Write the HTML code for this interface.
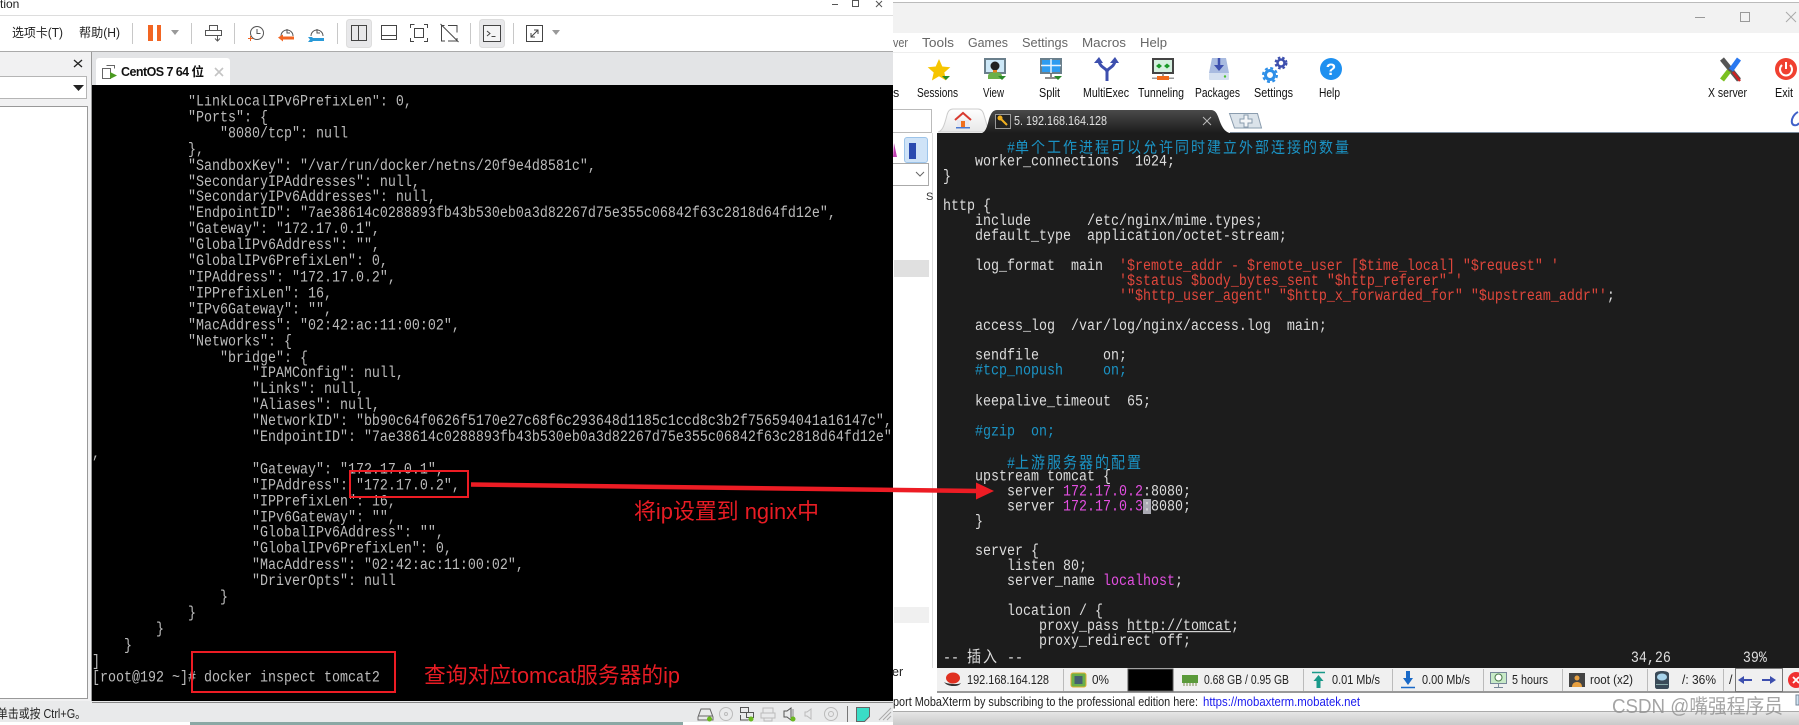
<!DOCTYPE html>
<html lang="zh">
<head>
<meta charset="utf-8">
<title>Docker inspect and nginx upstream</title>
<style>
html,body{margin:0;padding:0;width:1799px;height:725px;overflow:hidden;background:#fff}
.b{position:absolute}
#lt{left:92px;top:94.5px;width:801px;color:#bbb;font:13.333px "Liberation Mono","Noto Sans CJK SC",monospace;transform:scaleY(1.15);transform-origin:0 0;white-space:pre;overflow:hidden;height:540px}
#lt div{height:13.913px;line-height:13.913px}
#rt{left:943px;top:140px;width:856px;color:#dcdcdc;font:13.333px "Liberation Mono","Noto Sans CJK SC",monospace;transform:scaleY(1.15);transform-origin:0 0;white-space:pre;height:460px;overflow:hidden}
#rt div{height:13.043px;line-height:13.043px}
.c{color:#1b93c4}.s{color:#e0473c}.n{color:#e24fe0}
.z{font-family:"Noto Sans CJK SC",sans-serif;font-size:14px;letter-spacing:2px;line-height:13px}
.u{text-decoration:underline}
svg{position:absolute;left:0;top:0}
text{font-family:"Liberation Sans","Noto Sans CJK SC",sans-serif}
</style>
</head>
<body>
<div class="b" style="left:0;top:0;width:893px;height:725px;background:#fff"></div>
<div class="b" style="left:0;top:15px;width:893px;height:1px;background:#ddd"></div>
<div class="b" style="left:0;top:51px;width:893px;height:1px;background:#aaa"></div>
<div class="b" style="left:0;top:52px;width:91px;height:650px;background:#f1f1f2"></div>
<div class="b" style="left:91px;top:52px;width:1px;height:650px;background:#999"></div>
<div class="b" style="left:92px;top:52px;width:801px;height:33px;background:#e3e4e6"></div>
<div class="b" style="left:96px;top:58px;width:134px;height:27px;background:#fff;border-radius:3px 3px 0 0"></div>
<div class="b" style="left:-2px;top:76px;width:87px;height:21px;background:#fff;border:1px solid #b5b5b5"></div>
<div class="b" style="left:-2px;top:106px;width:88px;height:591px;background:#fff;border:1px solid #999"></div>
<div class="b" style="left:92px;top:85px;width:801px;height:617px;background:#000"></div>
<div class="b" style="left:0;top:701px;width:893px;height:21px;background:#e9eaeb"></div>
<div class="b" style="left:92px;top:702px;width:801px;height:1px;background:#888"></div>
<div class="b" style="left:190px;top:722px;width:493px;height:3px;background:#8aa8a4"></div>

<div class="b" id="lt"><div>            "LinkLocalIPv6PrefixLen": 0,</div><div>            "Ports": {</div><div>                "8080/tcp": null</div><div>            },</div><div>            "SandboxKey": "/var/run/docker/netns/20f9e4d8581c",</div><div>            "SecondaryIPAddresses": null,</div><div>            "SecondaryIPv6Addresses": null,</div><div>            "EndpointID": "7ae38614c0288893fb43b530eb0a3d82267d75e355c06842f63c2818d64fd12e",</div><div>            "Gateway": "172.17.0.1",</div><div>            "GlobalIPv6Address": "",</div><div>            "GlobalIPv6PrefixLen": 0,</div><div>            "IPAddress": "172.17.0.2",</div><div>            "IPPrefixLen": 16,</div><div>            "IPv6Gateway": "",</div><div>            "MacAddress": "02:42:ac:11:00:02",</div><div>            "Networks": {</div><div>                "bridge": {</div><div>                    "IPAMConfig": null,</div><div>                    "Links": null,</div><div>                    "Aliases": null,</div><div>                    "NetworkID": "bb90c64f0626f5170e27c68f6c293648d1185c1ccd8c3b2f756594041a16147c",</div><div>                    "EndpointID": "7ae38614c0288893fb43b530eb0a3d82267d75e355c06842f63c2818d64fd12e"</div><div>,</div><div>                    "Gateway": "172.17.0.1",</div><div>                    "IPAddress": "172.17.0.2",</div><div>                    "IPPrefixLen": 16,</div><div>                    "IPv6Gateway": "",</div><div>                    "GlobalIPv6Address": "",</div><div>                    "GlobalIPv6PrefixLen": 0,</div><div>                    "MacAddress": "02:42:ac:11:00:02",</div><div>                    "DriverOpts": null</div><div>                }</div><div>            }</div><div>        }</div><div>    }</div><div>]</div><div>[root@192 ~]# docker inspect tomcat2</div></div>

<!-- right window -->
<div class="b" style="left:893px;top:2px;width:906px;height:1px;background:#bbb"></div>
<div class="b" style="left:893px;top:3px;width:906px;height:30px;background:#f2f2f2"></div>
<div class="b" style="left:893px;top:52px;width:906px;height:1px;background:#eee"></div>
<div class="b" style="left:893px;top:109px;width:38px;height:22px;background:#fff;border:1px solid #bbb;border-left:0"></div>
<div class="b" style="left:932px;top:133px;width:1px;height:535px;background:#ddd"></div>
<div class="b" style="left:904px;top:137px;width:22px;height:24px;background:#cfe3f7;border:1px solid #9cc4ea;border-radius:3px"></div>
<div class="b" style="left:909px;top:143px;width:7px;height:16px;background:#2a4ab0"></div>
<div class="b" style="left:893px;top:163px;width:35px;height:21px;background:#fff;border:1px solid #aaa;border-left:0"></div>
<div class="b" style="left:894px;top:260px;width:35px;height:17px;background:#e0e0e0"></div>
<div class="b" style="left:894px;top:607px;width:35px;height:16px;background:#f0f0f0"></div>
<div class="b" style="left:937px;top:133px;width:862px;height:535px;background:#1c1c1c"></div>
<div class="b" style="left:1230px;top:132px;width:569px;height:1px;background:#7a8a9a"></div>
<div class="b" style="left:937px;top:668px;width:862px;height:24px;background:#f0f0f0"></div>
<div class="b" style="left:937px;top:691px;width:862px;height:2px;background:#999"></div>
<div class="b" style="left:893px;top:711px;width:906px;height:1px;background:#aaa"></div>
<div class="b" style="left:893px;top:712px;width:906px;height:13px;background:linear-gradient(#e6e6e6,#c9c9c9)"></div>
<div class="b" style="left:1143px;top:499px;width:8px;height:15px;background:#a9a9b2"></div>

<div class="b" id="rt"><div>        <span class="c">#<span class="z">单个工作进程可以允许同时建立外部连接的数量</span></span></div><div>    worker_connections  1024;</div><div>}</div><div> </div><div>http {</div><div>    include       /etc/nginx/mime.types;</div><div>    default_type  application/octet-stream;</div><div> </div><div>    log_format  main  <span class="s">'$remote_addr - $remote_user [$time_local] "$request" '</span></div><div><span class="s">                      '$status $body_bytes_sent "$http_referer" '</span></div><div><span class="s">                      '"$http_user_agent" "$http_x_forwarded_for" "$upstream_addr"'</span>;</div><div> </div><div>    access_log  /var/log/nginx/access.log  main;</div><div> </div><div>    sendfile        on;</div><div>    <span class="c">#tcp_nopush     on;</span></div><div> </div><div>    keepalive_timeout  65;</div><div> </div><div>    <span class="c">#gzip  on;</span></div><div> </div><div>        <span class="c">#<span class="z">上游服务器的配置</span></span></div><div>    upstream tomcat {</div><div>        server <span class="n">172.17.0.2</span>:8080;</div><div>        server <span class="n">172.17.0.3</span>:8080;</div><div>    }</div><div> </div><div>    server {</div><div>        listen 80;</div><div>        server_name <span class="n">localhost</span>;</div><div> </div><div>        location / {</div><div>            proxy_pass <span class="u">http://tomcat</span>;</div><div>            proxy_redirect off;</div><div>-- <span class="z">插入</span> --                                                                            34,26         39%</div></div>

<svg width="1799" height="725" viewBox="0 0 1799 725" xmlns="http://www.w3.org/2000/svg">
<!-- left window text -->
<text x="0" y="8" font-size="12" fill="#222">tion</text>
<g fill="none" stroke="#555" stroke-width="1"><path d="M832 4.500h6"/><rect x="852.500" y="0.500" width="6" height="6"/><path d="M876 1l6 6m0-6l-6 6"/></g>
<text x="12" y="37" font-size="12.500" fill="#222" textLength="51" lengthAdjust="spacingAndGlyphs">选项卡(T)</text>
<text x="79" y="37" font-size="12.500" fill="#222" textLength="41" lengthAdjust="spacingAndGlyphs">帮助(H)</text>
<g fill="#c8c8c8"><rect x="132" y="23" width="1" height="21"/><rect x="191" y="23" width="1" height="21"/><rect x="234" y="23" width="1" height="21"/><rect x="337" y="23" width="1" height="21"/><rect x="470" y="23" width="1" height="21"/><rect x="513" y="23" width="1" height="21"/></g>
<rect x="148" y="25" width="5" height="16" fill="#f26522"/><rect x="157" y="25" width="4" height="16" fill="#f26522"/>
<path d="M171 30h8l-4 5z" fill="#999"/>
<g fill="none" stroke="#555" stroke-width="1">
<path d="M209.500 30v-4.500h8v4.500M205.500 30.500h16v5h-16z"/><path d="M217.500 35v6m-2.500-2.500l2.500 2.500 2.500-2.500"/>
<circle cx="257" cy="33" r="6.500"/><path d="M257 29v4.500h3.500"/>
<path d="M281 36a6 6 0 1 1 12 0"/><path d="M287 29v4h3"/>
<path d="M311 36a6 6 0 1 1 12 0"/><path d="M317 29v4h3"/>
</g>
<path d="M248 38.500h5M250.500 36v5" stroke="#f26522" fill="none"/>
<path d="M278 37.500l5-3v2h11v3h-11v2z" fill="#f26522"/>
<path d="M308 37h4l1 1h11v3h-11l-1 1h-4l2-2.500z" fill="#2a9ad8"/>
<rect x="346.500" y="19.500" width="25" height="28" rx="3" fill="#e8e8ea" stroke="#ddd"/>
<rect x="479.500" y="19.500" width="25" height="28" rx="3" fill="#e8e8ea" stroke="#ddd"/>
<g fill="none" stroke="#444" stroke-width="1">
<rect x="351.500" y="25.500" width="15" height="15"/><path d="M358.500 25.500v15"/>
<rect x="381.500" y="25.500" width="15" height="14"/><path d="M381.500 35.500h15"/>
<path d="M410.500 28v-3.500h4M424 24.500h3.500v3.500M427.500 38v3.500h-3.500M414 41.500h-3.500v-3.500"/><rect x="414.500" y="28.500" width="9" height="9"/>
<path d="M448 25.500h9v7M457 38v3h-9M445 41h-3.500V25.500h3"/><path d="M440.500 24l18 18"/>
<rect x="483.500" y="25.500" width="17" height="16" fill="#f4f4f5"/><path d="M487 31l3 2.500-3 2.500M491.500 36.500h4"/>
<rect x="526.500" y="25.500" width="16" height="16"/><path d="M531 37l7-7m-4 0h4v4M531 33v4h4"/>
</g>
<path d="M552 30h8l-4 5z" fill="#999"/>
<path d="M74 60l8 7m0-7l-8 7" stroke="#222" stroke-width="1.300" fill="none"/>
<path d="M73 85h11l-5.500 6z" fill="#222"/>
<g fill="none" stroke="#666"><path d="M106.500 65.500h8v3"/><path d="M102.500 68.500h8v10h-8z" fill="#fff"/></g>
<path d="M110 72l7 3.500-7 3.500z" fill="#4a9a20"/>
<text x="121" y="76" font-size="12.500" font-weight="bold" fill="#111" textLength="83">CentOS 7 64 位</text>
<path d="M215 68l8 8m0-8l-8 8" stroke="#c4c4c4" stroke-width="1.600" fill="none"/>
<text x="-3" y="718" font-size="12.500" fill="#222" textLength="89" lengthAdjust="spacingAndGlyphs">单击或按 Ctrl+G。</text>
<g fill="none" stroke="#666">
<path d="M698 717l3-8h9l3 8v3h-15z"/><path d="M698 716h15"/>
</g>
<g fill="none" stroke="#bbb">
<circle cx="726" cy="714" r="6.500"/><circle cx="726" cy="714" r="1.500"/>
<path d="M763 713v-5h10v5M761 713h14v5h-14zM764 718v3h8v-3"/>
<path d="M811 709l-4 3h-2v4h2l4 3z"/>
<circle cx="831" cy="714" r="6.500"/><circle cx="831" cy="714" r="2.500"/>
</g>
<g fill="none" stroke="#555"><path d="M740.500 707.500h8v5h-8zM746.500 712.500h7v5h-7zM740.500 715v5h8" /></g>
<path d="M784 711v6h3l4 3v-12l-4 3z" fill="none" stroke="#555"/><path d="M793 709v8" stroke="#888"/>
<circle cx="709.500" cy="719" r="2.500" fill="#6ab820"/><circle cx="751" cy="719" r="2.500" fill="#6ab820"/><circle cx="793" cy="719" r="2.500" fill="#6ab820"/>
<rect x="847" y="706" width="1" height="16" fill="#777"/>
<path d="M856.500 707.500h13v9l-5 5h-8z" fill="#3adcc6" stroke="#666"/>
<path d="M883 720l8-8M887 720l4-4M879 720l12-12" stroke="#aaa" fill="none"/>

<!-- right window chrome -->
<path d="M1695 17.500h10M1740.500 12.500h9v9h-9z" stroke="#999" fill="none"/><path d="M1786 12l10 10m0-10l-10 10" stroke="#aaa" fill="none"/>
<g font-size="12.500" fill="#666">
<text x="893" y="47" textLength="15" lengthAdjust="spacingAndGlyphs">ver</text>
<text x="922" y="47" textLength="32" lengthAdjust="spacingAndGlyphs">Tools</text>
<text x="968" y="47" textLength="40" lengthAdjust="spacingAndGlyphs">Games</text>
<text x="1022" y="47" textLength="46" lengthAdjust="spacingAndGlyphs">Settings</text>
<text x="1082" y="47" textLength="44" lengthAdjust="spacingAndGlyphs">Macros</text>
<text x="1140" y="47" textLength="27" lengthAdjust="spacingAndGlyphs">Help</text>
</g>
<g font-size="12.500" fill="#111">
<text x="893" y="97">s</text>
<text x="917" y="97" textLength="41" lengthAdjust="spacingAndGlyphs">Sessions</text>
<text x="983" y="97" textLength="21" lengthAdjust="spacingAndGlyphs">View</text>
<text x="1039" y="97" textLength="21" lengthAdjust="spacingAndGlyphs">Split</text>
<text x="1083" y="97" textLength="46" lengthAdjust="spacingAndGlyphs">MultiExec</text>
<text x="1138" y="97" textLength="46" lengthAdjust="spacingAndGlyphs">Tunneling</text>
<text x="1195" y="97" textLength="45" lengthAdjust="spacingAndGlyphs">Packages</text>
<text x="1254" y="97" textLength="39" lengthAdjust="spacingAndGlyphs">Settings</text>
<text x="1319" y="97" textLength="21" lengthAdjust="spacingAndGlyphs">Help</text>
<text x="1708" y="97" textLength="39" lengthAdjust="spacingAndGlyphs">X server</text>
<text x="1775" y="97" textLength="18" lengthAdjust="spacingAndGlyphs">Exit</text>
</g>
<!-- star -->
<path d="M939 59l3.300 7.500 8 .7-6 5.300 1.800 8-7.100-4.200-7.100 4.200 1.800-8-6-5.300 8-.7z" fill="#f6c500"/>
<path d="M942 76h8l-4 4z" fill="#2a8a2a"/>
<!-- view -->
<rect x="985" y="59" width="20" height="14" fill="#cde8f8" stroke="#6a7f8c" stroke-width="2"/>
<path d="M988 79v-3c0-3 4-4 7-4s7 1 7 4v3z" fill="#6ab04a"/><circle cx="995" cy="66" r="4.500" fill="#222"/><rect x="993" y="70" width="4" height="2.500" fill="#e08020"/>
<path d="M998 76h8l-4 4z" fill="#2a8a2a"/>
<!-- split -->
<rect x="1041" y="59" width="20" height="14" fill="#2e9cf0" stroke="#6a7f8c" stroke-width="2"/><path d="M1051 59v14M1041 65.500h20" stroke="#e8f4fe" stroke-width="1.500"/>
<path d="M1051 73v4M1045 78h12" stroke="#666" stroke-width="1.500"/>
<path d="M1054 76h8l-4 4z" fill="#2a8a2a"/>
<!-- multiexec -->
<g fill="none" stroke="#3d4fae" stroke-width="3"><path d="M1107 81v-9c0-4-7-4-8-11M1107 72c0-4 7-4 8-11"/></g>
<path d="M1099 57l-5 6h9zM1115 57l-5 6h9z" fill="#3d4fae"/>
<!-- tunneling -->
<rect x="1153" y="59" width="20" height="14" fill="#d5f0e0" stroke="#444" stroke-width="2"/>
<path d="M1156 66l3-2.500v5zM1162 66l-3-2.500v5zM1164 66l3-2.500v5zM1170 66l-3-2.500v5z" fill="#1a9a2a"/>
<path d="M1163 73v4" stroke="#777" stroke-width="1.500"/><rect x="1152" y="77.500" width="22" height="1.500" fill="#999"/><rect x="1157" y="76" width="12" height="4" fill="#f06a1a"/>
<!-- packages -->
<path d="M1212 58h14l3 15h-20z" fill="#a9bbe0"/><rect x="1209" y="73" width="20" height="7" rx="1" fill="#d5e0f0"/><circle cx="1225" cy="76.500" r="1.200" fill="#4ac030"/>
<path d="M1219 58v10" stroke="#3d4fae" stroke-width="2.500"/><path d="M1214 65h10l-5 6z" fill="#3d4fae"/>
<!-- settings -->
<circle cx="1270" cy="75" r="4.500" fill="none" stroke="#2e8fe8" stroke-width="3"/><circle cx="1270" cy="75" r="7" fill="none" stroke="#2e8fe8" stroke-width="2" stroke-dasharray="3 2.500"/>
<circle cx="1281" cy="63" r="3.500" fill="none" stroke="#3d4fae" stroke-width="2.500"/><circle cx="1281" cy="63" r="5.500" fill="none" stroke="#3d4fae" stroke-width="2" stroke-dasharray="2.500 2"/>
<!-- help -->
<circle cx="1331" cy="69" r="11" fill="#1e90f0"/><text x="1331" y="75" font-size="17" font-weight="bold" fill="#fff" text-anchor="middle">?</text>
<!-- x server -->
<path d="M1722 59l17 21" stroke="#555" stroke-width="5"/><path d="M1739 59l-8 11" stroke="#2a78f0" stroke-width="5"/><path d="M1729 71l-7 9" stroke="#7ac020" stroke-width="5"/><path d="M1733 72l7 9" stroke="#d02020" stroke-width="2.500"/>
<!-- exit -->
<circle cx="1786" cy="69" r="11" fill="#f04030"/><path d="M1782 65a6 6 0 1 0 8 0M1786 62v7" stroke="#fff" stroke-width="2" fill="none"/>
<!-- tabs -->
<defs><linearGradient id="d" x1="0" y1="0" x2="0" y2="1"><stop offset="0" stop-color="#4a4a4a"/><stop offset="1" stop-color="#1c1c1c"/></linearGradient><linearGradient id="w" x1="0" y1="0" x2="0" y2="1"><stop offset="0" stop-color="#fff"/><stop offset="1" stop-color="#e8e8e8"/></linearGradient></defs>
<path d="M938 132c4-1 6-5 9-17 1-4 3-6 6-6h25c3 0 5 2 6 6l5 17z" fill="url(#w)" stroke="#ccc"/>
<path d="M955 120l8-7 8 7" fill="none" stroke="#d83a30" stroke-width="2"/><rect x="957" y="120" width="12" height="8" fill="#e8e8f0"/><rect x="961" y="121" width="4" height="7" fill="#f07020"/><rect x="956" y="127" width="14" height="1.500" fill="#4a78d0"/>
<path d="M982 133c3-1 5-5 7-14 2-6 4-9 8-9h214c4 0 6 3 8 9 2 6 5 13 11 14z" fill="url(#d)"/>
<rect x="995.500" y="114.500" width="15" height="14" fill="#222" stroke="#999"/>
<circle cx="1000" cy="118" r="2.500" fill="#f0b020"/><path d="M1001 119l6 6" stroke="#f0b020" stroke-width="2"/>
<text x="1014" y="125" font-size="12.500" fill="#e0e0e0" textLength="93" lengthAdjust="spacingAndGlyphs">5. 192.168.164.128</text>
<path d="M1203 117l8 8m0-8l-8 8" stroke="#bbb" fill="none"/>
<path d="M1229.500 113.500h28l4 14.500h-27z" fill="#dbe3ea" stroke="#8a9cae"/><path d="M1244 115h4v4h4v4h-4v4h-4v-4h-4v-4h4z" fill="#f4f6f8" stroke="#8a9cae"/>
<path d="M1798 112c-4 2-7 7-6 11 1 3 5 3 7 0" fill="none" stroke="#4060c8" stroke-width="2"/>
<path d="M916 172l4 4 4-4" fill="none" stroke="#666"/>
<path d="M894 143l3 14h-4z" fill="#c040b0"/>
<text x="926" y="200" font-size="11" fill="#333">S</text>
<text x="892" y="676" font-size="12.500" fill="#222">er</text>
<!-- status bar -->
<g fill="#bbb"><rect x="1063" y="669" width="1" height="22"/><rect x="1303" y="669" width="1" height="22"/><rect x="1392" y="669" width="1" height="22"/><rect x="1483" y="669" width="1" height="22"/><rect x="1562" y="669" width="1" height="22"/><rect x="1647" y="669" width="1" height="22"/><rect x="1723" y="669" width="1" height="22"/></g>
<rect x="1128" y="669" width="45" height="22" fill="#000" stroke="#555"/>
<ellipse cx="953" cy="678" rx="7" ry="5.500" fill="#e03020"/><path d="M944 682c3 2 14 3 17 1-2 3-5 3-8 3s-7-1-9-4z" fill="#333"/>
<rect x="1071" y="673" width="15" height="14" rx="2" fill="#6ab04a" stroke="#e0b030"/><rect x="1074.500" y="676" width="8" height="8" fill="#456070"/>
<rect x="1182" y="675" width="16" height="8" fill="#5a9a3a"/><path d="M1184 683v3m3-3v3m3-3v3m3-3v3m3-3v3" stroke="#7a8a50"/>
<path d="M1312 672.500h13" stroke="#1a9a8a" stroke-width="1.500"/><path d="M1318.500 675l5 6h-3v7h-4v-7h-3z" fill="#1a9a8a"/>
<path d="M1401 687.500h14" stroke="#1a6ac8" stroke-width="1.500"/><path d="M1406 671h4v7h3l-5 7-5-7h3z" fill="#1a6ac8"/>
<rect x="1490.500" y="672.500" width="16" height="11" fill="#c8eac8" stroke="#789"/><circle cx="1498.500" cy="677.500" r="3.500" fill="#fff" stroke="#4a7a4a"/><path d="M1498.500 684v3M1494 687.500h9" stroke="#789"/>
<rect x="1569" y="673" width="16" height="14" fill="#444"/><circle cx="1577" cy="678" r="2.500" fill="#e8a040"/><path d="M1572 687c0-4 3-5 5-5s5 1 5 5z" fill="#e8a040"/>
<path d="M1655 674c0-2 3-3 7-3s7 1 7 3v13c0 1-1 2-2 2h-10c-1 0-2-1-2-2z" fill="#3a4a58"/><ellipse cx="1662" cy="677" rx="5" ry="3.500" fill="#a8d4ec"/><rect x="1656" y="684" width="12" height="1" fill="#8aa"/>
<g font-size="12.500" fill="#222">
<text x="967" y="684" textLength="82" lengthAdjust="spacingAndGlyphs">192.168.164.128</text>
<text x="1092" y="684" textLength="17" lengthAdjust="spacingAndGlyphs">0%</text>
<text x="1204" y="684" textLength="85" lengthAdjust="spacingAndGlyphs">0.68 GB / 0.95 GB</text>
<text x="1332" y="684" textLength="48" lengthAdjust="spacingAndGlyphs">0.01 Mb/s</text>
<text x="1422" y="684" textLength="48" lengthAdjust="spacingAndGlyphs">0.00 Mb/s</text>
<text x="1512" y="684" textLength="36" lengthAdjust="spacingAndGlyphs">5 hours</text>
<text x="1590" y="684" textLength="43" lengthAdjust="spacingAndGlyphs">root (x2)</text>
<text x="1682" y="684" textLength="34" lengthAdjust="spacingAndGlyphs">/: 36%</text>
<text x="1729" y="684">/</text>
</g>
<rect x="1735.500" y="668.500" width="47" height="23" fill="#f0f0f0" stroke="#777"/>
<path d="M1738 680l6-4v3h8v2h-8v3zM1776 680l-6-4v3h-8v2h8v3z" fill="#3d4fae"/>
<circle cx="1796" cy="680" r="8" fill="#f03030"/><path d="M1793 677l6 6m0-6l-6 6" stroke="#fff" stroke-width="1.800"/>
<!-- message bar -->
<text x="893" y="706" font-size="12.500" fill="#222" textLength="305" lengthAdjust="spacingAndGlyphs">port MobaXterm by subscribing to the professional edition here:</text>
<text x="1203" y="706" font-size="12.500" fill="#1a1aee" textLength="157" lengthAdjust="spacingAndGlyphs">https://mobaxterm.mobatek.net</text>
<rect x="1796" y="695" width="3" height="10" fill="#d0e4f4" stroke="#789"/>
<text x="1612" y="713" font-size="20" fill="#8f8f8f" fill-opacity=".8" textLength="171" lengthAdjust="spacingAndGlyphs">CSDN @嘴强程序员</text>
<!-- annotations -->
<rect x="350" y="471" width="118" height="26" fill="none" stroke="#ed1c24" stroke-width="2"/>
<rect x="192" y="652" width="203" height="40" fill="none" stroke="#ed1c24" stroke-width="2"/>
<path d="M471 484.500L978 491" stroke="#ed1c24" stroke-width="4.500" fill="none"/>
<path d="M976 482.500l18 8.500-18 8.500z" fill="#ed1c24"/>
<text x="634" y="519" font-size="22" fill="#e81c24" textLength="185" lengthAdjust="spacingAndGlyphs">将ip设置到 nginx中</text>
<text x="424" y="683" font-size="22" fill="#e81c24" textLength="256" lengthAdjust="spacingAndGlyphs">查询对应tomcat服务器的ip</text>
</svg>
</body>
</html>
